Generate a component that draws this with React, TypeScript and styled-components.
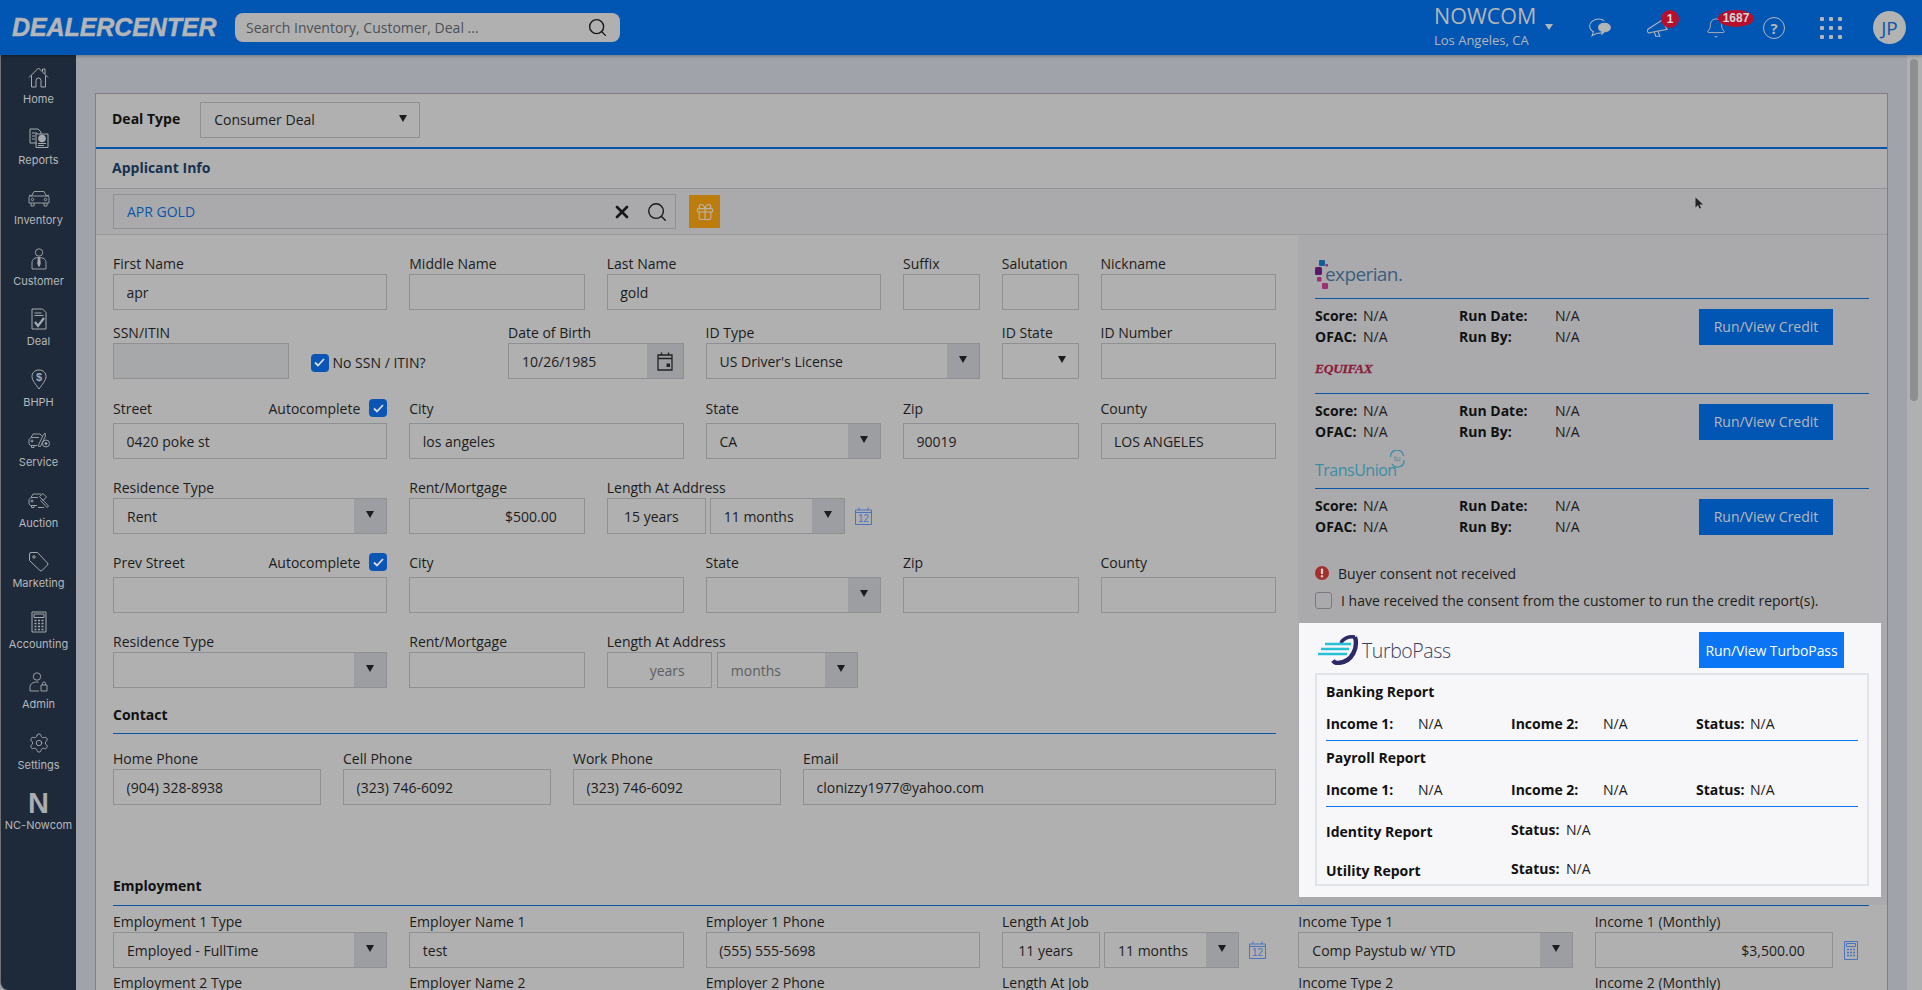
import React from "react";
import styled, { createGlobalStyle } from "styled-components";
import { Bell, Gift, Search, Settings, X } from "lucide-react";

const GlobalStyle = createGlobalStyle`
  html, body {
    margin: 0;
    padding: 0;
    width: 1922px;
    height: 990px;
    overflow: hidden;
    background: #a0a4aa;
    font-family: "Open Sans", "Liberation Sans", sans-serif;
    font-size: 14px;
    color: #1c1c1c;
  }
  * { box-sizing: border-box; }
`;

const navItems = [
  { label: "Home", icon: "home" },
  { label: "Reports", icon: "reports" },
  { label: "Inventory", icon: "inventory" },
  { label: "Customer", icon: "customer" },
  { label: "Deal", icon: "deal" },
  { label: "BHPH", icon: "bhph" },
  { label: "Service", icon: "service" },
  { label: "Auction", icon: "auction" },
  { label: "Marketing", icon: "marketing" },
  { label: "Accounting", icon: "accounting" },
  { label: "Admin", icon: "admin" },
  { label: "Settings", icon: "settings" },
  { label: "NC-Nowcom", icon: "nowcom" },
];

const NavIcon = ({ name }: { name: string }) => {
  switch (name) {
    case "home":
      return (
        <svg width="21" height="21" viewBox="0 0 21 21" fill="none" stroke="currentColor">
          <path d="M1 10.5 10.5 1 20 10.5M3.5 8.5V20H8v-6.5a2.5 2.5 0 0 1 5 0V20h4.5V8.5M14.5 4.5V2h2.5v5" />
        </svg>
      );
    case "reports":
      return (
        <svg width="20" height="20" viewBox="0 0 20 20" fill="none" stroke="currentColor">
          <path d="M8 15H1V1h8l3 3v2M3 5h5M3 8h3M3 11h3" />
          <path d="M7 6h12v13.5H7z" />
          <circle cx="13" cy="10.5" r="3.4" fill="currentColor" />
          <path d="M9 15.5h8M9 17.5h6" />
        </svg>
      );
    case "inventory":
      return (
        <svg width="22" height="17" viewBox="0 0 22 17" fill="none" stroke="currentColor" strokeWidth="0.9">
          <path d="M3.5 6 6 1.5h10L18.5 6M1 5l2.5 1M21 5l-2.5 1" />
          <path d="M2.5 6h17a1.5 1.5 0 0 1 1.5 1.5V13H1V7.500A1.5 1.5 0 0 1 2.5 6zM3 13v3h3v-3M16 13v3h3v-3" />
          <circle cx="4.5" cy="9.5" r="1.2" />
          <circle cx="17.5" cy="9.5" r="1.2" />
        </svg>
      );
    case "customer":
      return (
        <svg width="16" height="22" viewBox="0 0 16 22" fill="none" stroke="currentColor" strokeWidth="0.9">
          <circle cx="8" cy="4.5" r="3.7" />
          <path d="M1 21v-6c0-4 3-5.5 7-5.5s7 1.5 7 5.5v6z" />
          <path d="M7.200 9.500 6.800 16 8 18.500 9.200 16 8.800 9.500" fill="currentColor" />
        </svg>
      );
    case "deal":
      return (
        <svg width="16" height="22" viewBox="0 0 16 22" fill="none" stroke="currentColor">
          <path d="M1 1h10.5L15 4.500V21H1z" />
          <path d="M3.5 5h7M3.5 7.5h9" />
          <path d="M4 14l3 4 6-8" strokeWidth="2.2" />
        </svg>
      );
    case "bhph":
      return (
        <svg width="16" height="21" viewBox="0 0 16 21" fill="none" stroke="currentColor">
          <path d="M8 1C3.5 1 1 4 1 7.5c0 4 4 8 7 12.5 3-4.5 7-8.5 7-12.5C15 4 12.5 1 8 1z" />
          <text x="8" y="11.5" textAnchor="middle" fontSize="11" fontWeight="700" fill="currentColor" stroke="none" fontFamily="Liberation Sans">$</text>
        </svg>
      );
    case "service":
      return (
        <svg width="22" height="17" viewBox="0 0 22 17" fill="none" stroke="currentColor" strokeWidth="0.9">
          <path d="M3 5.5 5 2h7l2 2M9 13.5H2.500L1 12V7.500l2-2h8M3.500 13.500v2h2.500v-2" />
          <path d="M10 14 15 3.500l2-2.500.5 3-5 10.500z" />
          <circle cx="18" cy="11.5" r="3.5" />
          <circle cx="18" cy="11.5" r="1" fill="currentColor" />
          <circle cx="4" cy="9" r="1" />
        </svg>
      );
    case "auction":
      return (
        <svg width="22" height="17" viewBox="0 0 22 17" fill="none" stroke="currentColor" strokeWidth="0.9">
          <path d="M3 5.5 5 2h8M9 13.500H2.500L1 12V7.500l2-2h7M3.500 13.500v2h2.500v-2" />
          <path d="M11.500 4.500 15 1.500l3.500 3.500-3.500 3.500zM14 7l6.500 7-1.500 1.500-6.500-7M10 15.500h6" />
          <circle cx="4" cy="9" r="1" />
        </svg>
      );
    case "marketing":
      return (
        <svg width="21" height="21" viewBox="0 0 21 21" fill="none" stroke="currentColor">
          <path d="M1.5 3A1.5 1.5 0 0 1 3 1.500h6.500L19.500 12a1.500 1.500 0 0 1 0 2L14 19.500a1.500 1.500 0 0 1-2 0L1.500 9.500z" />
          <circle cx="6" cy="6" r="1.2" />
        </svg>
      );
    case "accounting":
      return (
        <svg width="16" height="22" viewBox="0 0 16 22" fill="none" stroke="currentColor">
          <path d="M1 1h14v20H1zM3 3h10v3.500H3z" />
          <path d="M3.500 9.500h2M7 9.500h2M10.500 9.500h2M3.500 12.500h2M7 12.500h2M10.500 12.500h2M3.500 15.500h2M7 15.500h2M10.500 15.500h2M3.500 18.500h2M7 18.500h2M10.500 18.500h2" strokeWidth="1.4" />
        </svg>
      );
    case "admin":
      return (
        <svg width="19" height="20" viewBox="0 0 19 20" fill="none" stroke="currentColor" strokeWidth="0.9">
          <circle cx="8" cy="4.5" r="3.7" />
          <path d="M1 19v-4c0-3 3-5 7-5h1.500M1 19h9" />
          <path d="M12 13h6v6h-6zM13.500 13v-1.500a1.500 1.500 0 0 1 3 0V13" />
        </svg>
      );
    case "settings":
      return <Settings size={22} strokeWidth={1} />;
    default:
      return <NowcomMark>N</NowcomMark>;
  }
};

const TopIcon = ({ name }: { name: string }) => {
  if (name === "chat") {
    return (
      <svg width="23" height="19" viewBox="0 0 23 19" fill="none" stroke="currentColor" strokeWidth="1.1">
        <path d="M16 2.500C14.500 1.200 12.500.7 10.500.7 5 .7.700 3.800.7 8c0 2.500 1.500 4.500 4 6l-1.500 4 5-2.500c2 .3 3.500 0 5-.4" />
        <path d="M16 5c3.500 0 6.300 1.900 6.300 4.500 0 2.500-2.800 4.500-6.300 4.500l-2.500 2.500.3-2.800c-2.300-.6-3.800-2.200-3.800-4.200C10 6.900 12.600 5 16 5z" fill="currentColor" />
      </svg>
    );
  }
  return (
    <svg width="24" height="20" viewBox="0 0 24 20" fill="none" stroke="currentColor" strokeWidth="1.2">
      <path d="M1.500 11 16 1.500 22 11.500 4 15a2.200 2.200 0 0 1-2.500-4z" />
      <path d="M8 14.500l1.500 4.500h4.500l-2-5.300" />
    </svg>
  );
};

const SmallCalendar = () => (
  <svg width="17" height="18" viewBox="0 0 17 18" fill="none" stroke="#4a74c0">
    <path d="M.5 3h16v14.500H.5zM.5 5.500h16M4 .5V3M13 .5V3" />
    <text x="8.5" y="15" textAnchor="middle" fontSize="10" fill="#4a74c0" stroke="none" fontFamily="Liberation Sans">12</text>
  </svg>
);

const PickerCalendar = () => (
  <svg width="16" height="19" viewBox="0 0 16 19" fill="none" stroke="#222">
    <path d="M1 3h14v15H1z" strokeWidth="1.3" />
    <path d="M1 6.500h14M4.500.5V3M11.500.5V3" strokeWidth="1.3" />
    <rect x="9.5" y="11.5" width="3.5" height="3.5" fill="#222" stroke="none" />
  </svg>
);

const SmallCalculator = () => (
  <svg width="14" height="19" viewBox="0 0 14 19" fill="none" stroke="#4a74c0">
    <path d="M.5.500h13v18H.5zM2.500 2.500h9v3h-9z" />
    <path d="M3 8.500h2M6 8.500h2M9 8.500h2M3 11.500h2M6 11.500h2M9 11.500h2M3 14.500h2M6 14.500h2M9 14.500h2" strokeWidth="1.3" />
  </svg>
);

const CheckBox = () => (
  <CheckMark>
    <svg width="11" height="9" viewBox="0 0 11 9" fill="none" stroke="#d9dde3" strokeWidth="1.8">
      <path d="M1 4.500 4 7.500 10 1" />
    </svg>
  </CheckMark>
);

const Field = ({ span, start, label, aside, children }: any) => (
  <FieldBox $span={span} $start={start}>
    {aside ? (
      <LabelRow>
        <FieldLabel>{label}</FieldLabel>
        {aside}
      </LabelRow>
    ) : (
      <FieldLabel>{label}</FieldLabel>
    )}
    {children}
  </FieldBox>
);

const Text = ({ value = "", right = false }: { value?: string; right?: boolean }) => (
  <TextInput readOnly value={value} $right={right} />
);

const Select = ({ value = "", plain = false, muted = false, width }: any) => (
  <SelectBox $width={width}>
    <SelectValue $muted={muted}>{value}</SelectValue>
    <ArrowBox $plain={plain}>
      <Arrow />
    </ArrowBox>
  </SelectBox>
);

const AutoComplete = () => (
  <AutoWrap>
    <FieldLabel as="span">Autocomplete</FieldLabel>
    <CheckBox />
  </AutoWrap>
);

const CreditBlock = ({ logo, first = false }: any) => (
  <>
    <CreditHead $first={first}>{logo}</CreditHead>
    <CreditBody>
      <CreditStats>
        <b>Score:</b>
        <span>N/A</span>
        <b>Run Date:</b>
        <span>N/A</span>
        <b>OFAC:</b>
        <span>N/A</span>
        <b>Run By:</b>
        <span>N/A</span>
      </CreditStats>
      <RunButton>Run/View Credit</RunButton>
    </CreditBody>
  </>
);

const IncomeRow = () => (
  <IncomeGrid>
    <b>Income 1:</b>
    <span>N/A</span>
    <b>Income 2:</b>
    <span>N/A</span>
    <b>Status:</b>
    <span>N/A</span>
  </IncomeGrid>
);

const App = () => {
  return (
    <Page>
      <GlobalStyle />
      <Header>
        <Logo>DEALERCENTER</Logo>
        <SearchBar>
          <SearchText>Search Inventory, Customer, Deal ...</SearchText>
          <Search size={21} strokeWidth={1.6} color="#15181c" />
        </SearchBar>
        <HeaderRight>
          <Account>
            <AccountName>NOWCOM</AccountName>
            <AccountCity>Los Angeles, CA</AccountCity>
          </Account>
          <AccountCaret />
          <TopButton>
            <TopIcon name="chat" />
          </TopButton>
          <TopButton>
            <TopIcon name="horn" />
            <Badge $round>1</Badge>
          </TopButton>
          <TopButton>
            <Bell size={26} strokeWidth={1} />
            <Badge>1687</Badge>
          </TopButton>
          <HelpIcon>?</HelpIcon>
          <AppsGrid>
            {Array.from({ length: 9 }).map((_, i) => (
              <i key={i} />
            ))}
          </AppsGrid>
          <Avatar>JP</Avatar>
        </HeaderRight>
      </Header>
      <Main>
        <Sidebar>
          {navItems.map((item) => (
            <NavItem key={item.label}>
              <NavIconBox>
                <NavIcon name={item.icon} />
              </NavIconBox>
              <NavLabel>{item.label}</NavLabel>
            </NavItem>
          ))}
        </Sidebar>
        <Content>
          <Panel>
            <DealRow>
              <DealLabel>Deal Type</DealLabel>
              <Select value="Consumer Deal" plain width="220px" />
            </DealRow>
            <SectionBar>Applicant Info</SectionBar>
            <LookupRow>
              <LookupBox>
                <LookupValue>APR GOLD</LookupValue>
                <X size={20} strokeWidth={3.2} color="#16181b" />
                <Search size={22} strokeWidth={1.5} color="#16181b" />
              </LookupBox>
              <GiftButton>
                <Gift size={20} strokeWidth={1.4} />
              </GiftButton>
            </LookupRow>
            <Body>
              <FormColumn>
                <FormRow $top={19}>
                  <Field span={3} label="First Name"><Text value="apr" /></Field>
                  <Field span={2} label="Middle Name"><Text /></Field>
                  <Field span={3} label="Last Name"><Text value="gold" /></Field>
                  <Field span={1} label="Suffix"><Text /></Field>
                  <Field span={1} label="Salutation"><Text /></Field>
                  <Field span={2} label="Nickname"><Text /></Field>
                </FormRow>
                <FormRow $top={13}>
                  <Field span={2} label="SSN/ITIN"><TextInput readOnly value="" $disabled /></Field>
                  <NoSsn>
                    <CheckBox />
                    No SSN / ITIN?
                  </NoSsn>
                  <Field span={2} label="Date of Birth">
                    <SelectBox>
                      <SelectValue>10/26/1985</SelectValue>
                      <ArrowBox $wide>
                        <PickerCalendar />
                      </ArrowBox>
                    </SelectBox>
                  </Field>
                  <Field span={3} label="ID Type"><Select value="US Driver's License" /></Field>
                  <Field span={1} label="ID State"><Select plain /></Field>
                  <Field span={2} label="ID Number"><Text /></Field>
                </FormRow>
                <FormRow $top={20}>
                  <Field span={3} label="Street" aside={<AutoComplete />}><Text value="0420 poke st" /></Field>
                  <Field span={3} label="City" aside={<span />}><Text value="los angeles" /></Field>
                  <Field span={2} label="State" aside={<span />}><Select value="CA" /></Field>
                  <Field span={2} label="Zip" aside={<span />}><Text value="90019" /></Field>
                  <Field span={2} label="County" aside={<span />}><Text value="LOS ANGELES" /></Field>
                </FormRow>
                <FormRow $top={19}>
                  <Field span={3} label="Residence Type"><Select value="Rent" /></Field>
                  <Field span={2} label="Rent/Mortgage"><Text value="$500.00" right /></Field>
                  <Field span={4} label="Length At Address">
                    <LengthRow>
                      <LengthInput readOnly value="15 years" $width={99} />
                      <Select value="11 months" width="135px" />
                      <CalendarSlot>
                        <SmallCalendar />
                      </CalendarSlot>
                    </LengthRow>
                  </Field>
                </FormRow>
                <FormRow $top={19}>
                  <Field span={3} label="Prev Street" aside={<AutoComplete />}><Text /></Field>
                  <Field span={3} label="City" aside={<span />}><Text /></Field>
                  <Field span={2} label="State" aside={<span />}><Select /></Field>
                  <Field span={2} label="Zip" aside={<span />}><Text /></Field>
                  <Field span={2} label="County" aside={<span />}><Text /></Field>
                </FormRow>
                <FormRow $top={19}>
                  <Field span={3} label="Residence Type"><Select /></Field>
                  <Field span={2} label="Rent/Mortgage"><Text /></Field>
                  <Field span={4} label="Length At Address">
                    <LengthRow $gap={5}>
                      <LengthInput readOnly value="years" $width={105} $muted />
                      <Select value="months" muted width="141px" />
                    </LengthRow>
                  </Field>
                </FormRow>
                <SectionTitle $top={17}>Contact</SectionTitle>
                <ContactRow>
                  <PhoneField>
                    <FieldLabel>Home Phone</FieldLabel>
                    <Text value="(904) 328-8938" />
                  </PhoneField>
                  <PhoneField>
                    <FieldLabel>Cell Phone</FieldLabel>
                    <Text value="(323) 746-6092" />
                  </PhoneField>
                  <PhoneField>
                    <FieldLabel>Work Phone</FieldLabel>
                    <Text value="(323) 746-6092" />
                  </PhoneField>
                  <EmailField>
                    <FieldLabel>Email</FieldLabel>
                    <Text value="clonizzy1977@yahoo.com" />
                  </EmailField>
                </ContactRow>
                <EmploymentTitle>Employment</EmploymentTitle>
              </FormColumn>
              <CreditColumn>
                <CreditBlock
                  first
                  logo={
                    <ExperianLogo>
                      <svg width="13" height="29" viewBox="0 0 13 29">
                        <rect x="4" y="0" width="6" height="6" rx="1" fill="#0f5f9c" />
                        <rect x="10.5" y="4" width="2.5" height="2.5" fill="#a02e74" />
                        <rect x="0" y="7" width="7" height="8" rx="1.5" fill="#5a1a6c" />
                        <rect x="2" y="17" width="4.5" height="4.5" rx="1" fill="#a02e74" />
                        <rect x="7" y="23" width="6" height="6" rx="1" fill="#a02e74" />
                      </svg>
                      <ExperianText>experian.</ExperianText>
                    </ExperianLogo>
                  }
                />
                <CreditBlock logo={<EquifaxLogo>EQUIFAX</EquifaxLogo>} />
                <CreditBlock
                  logo={
                    <TransUnionLogo>
                      TransUnion
                      <TuBadge>
                        <svg width="16" height="19" viewBox="0 0 16 19" fill="none" stroke="#3a8ea5" strokeWidth="1.3">
                          <path d="M1.500 7a6.500 6.500 0 0 1 13-1M15 10a6.500 6.500 0 0 1-12 4" />
                          <text x="8" y="11" textAnchor="middle" fontSize="7.5" fill="#3a8ea5" stroke="none" fontFamily="Open Sans">tu</text>
                        </svg>
                      </TuBadge>
                    </TransUnionLogo>
                  }
                />
                <ConsentNote>
                  <svg width="14" height="14" viewBox="0 0 14 14">
                    <circle cx="7" cy="7" r="7" fill="#a3302c" />
                    <rect x="5.9" y="2.5" width="2.2" height="5.8" rx="1" fill="#d4d4d4" />
                    <circle cx="7" cy="10.3" r="1.2" fill="#d4d4d4" />
                  </svg>
                  Buyer consent not received
                </ConsentNote>
                <ConsentCheck>
                  <EmptyBox />
                  I have received the consent from the customer to run the credit report(s).
                </ConsentCheck>
                <TurboCard>
                  <TurboHead>
                    <TurboLogo>
                      <svg width="42" height="30" viewBox="0 0 42 30" fill="none">
                        <path d="M38 2C31 1 25.500 4 24 8" stroke="#2c2a66" strokeWidth="3.4" />
                        <path d="M38 2C41 12 36 27 21 28 18.500 28.200 17 27 16 25.500" stroke="#2c2a66" strokeWidth="4.4" />
                        <path d="M8 9h26M4 14h28M1 19h29" stroke="#28c0d4" strokeWidth="2.6" />
                      </svg>
                      <TurboText>TurboPass</TurboText>
                    </TurboLogo>
                    <TurboButton>Run/View TurboPass</TurboButton>
                  </TurboHead>
                  <ReportBox>
                    <ReportTitle>Banking Report</ReportTitle>
                    <IncomeRow />
                    <ReportTitle $top={7}>Payroll Report</ReportTitle>
                    <IncomeRow />
                    <StatusRow $top={13}>
                      <ReportName>Identity Report</ReportName>
                      <StatusPair>
                        <b>Status:</b>
                        <span>N/A</span>
                      </StatusPair>
                    </StatusRow>
                    <StatusRow $top={17}>
                      <ReportName>Utility Report</ReportName>
                      <StatusPair>
                        <b>Status:</b>
                        <span>N/A</span>
                      </StatusPair>
                    </StatusRow>
                  </ReportBox>
                </TurboCard>
              </CreditColumn>
            </Body>
            <EmploymentGrid>
              <Field span={3} label="Employment 1 Type"><Select value="Employed - FullTime" /></Field>
              <Field span={3} label="Employer Name 1"><Text value="test" /></Field>
              <Field span={3} label="Employer 1 Phone"><Text value="(555) 555-5698" /></Field>
              <Field span={3} label="Length At Job">
                <LengthRow>
                  <LengthInput readOnly value="11 years" $width={98} />
                  <Select value="11 months" width="135px" />
                  <CalendarSlot>
                    <SmallCalendar />
                  </CalendarSlot>
                </LengthRow>
              </Field>
              <Field span={3} label="Income Type 1"><Select value="Comp Paystub w/ YTD" /></Field>
              <Field span={3} label="Income 1 (Monthly)">
                <IncomeAmount>
                  <AmountSlot>
                    <Text value="$3,500.00" right />
                  </AmountSlot>
                  <SmallCalculator />
                </IncomeAmount>
              </Field>
              <Field span={3} label="Employment 2 Type" />
              <Field span={3} label="Employer Name 2" />
              <Field span={3} label="Employer 2 Phone" />
              <Field span={3} label="Length At Job" />
              <Field span={3} label="Income Type 2" />
              <Field span={3} label="Income 2 (Monthly)" />
            </EmploymentGrid>
          </Panel>
        </Content>
        <ScrollTrack>
          <ScrollThumb />
        </ScrollTrack>
      </Main>
      <Pointer>
        <svg width="8" height="13" viewBox="0 0 8 13">
          <path d="M.5.500v10l2.500-2.500 1.500 3.500 1.500-.6L4.500 7.500H8z" fill="#222" />
        </svg>
      </Pointer>
    </Page>
  );
};

const Page = styled.div`
  position: relative;
  width: 1922px;
  height: 990px;
  overflow: hidden;
`;

const Header = styled.header`
  position: relative;
  z-index: 2;
  display: flex;
  align-items: center;
  height: 55px;
  padding-left: 12px;
  background: #0256b3;
  box-shadow: 0 1px 3px rgba(0, 0, 0, 0.3);
`;

const Logo = styled.div`
  width: 205px;
  font-family: "Liberation Sans", sans-serif;
  font-size: 25px;
  font-weight: 700;
  font-style: italic;
  letter-spacing: -0.1px;
  color: #b3b5b8;
  -webkit-text-stroke: 0.5px #b3b5b8;
`;

const SearchBar = styled.div`
  display: flex;
  align-items: center;
  justify-content: space-between;
  width: 385px;
  height: 29px;
  margin-left: 18px;
  padding: 0 12px 0 11px;
  background: #b0b0b0;
  border-radius: 8px;
`;

const SearchText = styled.span`
  font-size: 14px;
  color: #4c5157;
`;

const HeaderRight = styled.div`
  display: flex;
  align-items: center;
  margin-left: auto;
  padding-right: 16px;
  color: #b3b5b8;
`;

const Account = styled.div`
  display: flex;
  flex-direction: column;
  width: 111px;
`;

const AccountName = styled.span`
  font-size: 21.5px;
  line-height: 26px;
  margin-top: -2px;
`;

const AccountCity = styled.span`
  font-size: 13px;
  line-height: 20px;
  font-weight: 500;
  margin-top: 1px;
`;

const AccountCaret = styled.i`
  width: 0;
  height: 0;
  position: relative;
  top: -1px;
  border-left: 4px solid transparent;
  border-right: 4px solid transparent;
  border-top: 6px solid #b3b5b8;
  margin-right: 36px;
`;

const TopButton = styled.div`
  position: relative;
  display: flex;
  align-items: center;
  justify-content: center;
  width: 22px;
  height: 24px;
  margin-right: 36px;
`;

const Badge = styled.span<{ $round?: boolean }>`
  position: absolute;
  top: -6px;
  left: ${(p) => (p.$round ? "14px" : "13px")};
  display: flex;
  align-items: center;
  justify-content: center;
  width: ${(p) => (p.$round ? "18px" : "36px")};
  height: ${(p) => (p.$round ? "18px" : "17px")};
  border-radius: 50%;
  background: #b5102d;
  color: #d5d5d5;
  font-family: "Liberation Sans", sans-serif;
  font-size: 12px;
  font-weight: 700;
`;

const HelpIcon = styled.div`
  display: flex;
  align-items: center;
  justify-content: center;
  width: 22px;
  height: 22px;
  margin-right: 35px;
  border: 1px solid #b3b5b8;
  border-radius: 50%;
  font-size: 15px;
  font-weight: 700;
`;

const AppsGrid = styled.div`
  display: grid;
  grid-template-columns: repeat(3, 4px);
  grid-auto-rows: 4px;
  gap: 5px;
  margin-right: 31px;

  i {
    background: #b3b5b8;
    border-radius: 1px;
  }
`;

const Avatar = styled.div`
  display: flex;
  align-items: center;
  justify-content: center;
  width: 33px;
  height: 33px;
  border-radius: 50%;
  background: #b3b3b3;
  color: #0b55a8;
  font-size: 19px;
`;

const Main = styled.div`
  display: flex;
  height: 935px;
`;

const Sidebar = styled.nav`
  flex: 0 0 76px;
  padding-top: 7px;
  background: #1e2a39;
  border-left: 1px solid #6e7074;
  border-bottom-left-radius: 8px;
  color: #a6aaaf;
`;

const NavItem = styled.div`
  display: flex;
  flex-direction: column;
  align-items: center;
  height: 60.5px;
`;

const NavIconBox = styled.div`
  display: flex;
  align-items: center;
  justify-content: center;
  height: 30px;
`;

const NavLabel = styled.span`
  font-family: Inter, "Liberation Sans", sans-serif;
  font-size: 11px;
  line-height: 14px;
  color: #b5b8bc;
  white-space: nowrap;
`;

const NowcomMark = styled.span`
  font-family: "Liberation Sans", sans-serif;
  font-size: 29px;
  line-height: 30px;
  font-weight: 700;
  color: #a9acb0;
`;

const Content = styled.div`
  flex: 0 0 1831px;
  padding: 38px 19px 0;
  overflow: hidden;
`;

const Panel = styled.section`
  width: 1793px;
  border: 1px solid #7d7f82;
  border-bottom: 0;
  background: #b0b0b0;
`;

const DealRow = styled.div`
  display: flex;
  align-items: center;
  gap: 20px;
  height: 55px;
  padding: 0 0 2px 16px;
  border-bottom: 2px solid #0b55a8;
`;

const DealLabel = styled.span`
  flex: 0 0 68px;
  margin-top: -2px;
  font-weight: 700;
  white-space: nowrap;
  color: #111;
`;

const SectionBar = styled.div`
  display: flex;
  align-items: center;
  height: 40px;
  padding: 0 0 2px 16px;
  border-bottom: 1px solid #919396;
  font-weight: 700;
  color: #17324f;
`;

const LookupRow = styled.div`
  display: flex;
  align-items: center;
  gap: 13px;
  height: 46px;
  padding-left: 17px;
  background: #aaaaac;
  border-bottom: 1px solid #999a9c;
`;

const LookupBox = styled.div`
  display: flex;
  align-items: center;
  width: 563px;
  height: 35px;
  padding: 0 7px 0 13px;
  gap: 14px;
  border: 1px solid #8e9094;
`;

const LookupValue = styled.span`
  flex: 1;
  color: #0b55a8;
`;

const GiftButton = styled.div`
  display: flex;
  align-items: center;
  justify-content: center;
  width: 31px;
  height: 33px;
  background: #bd7c0e;
  color: #b9b3a6;
`;

const Body = styled.div`
  display: grid;
  grid-template-columns: 1202px 1fr;
`;

const FormColumn = styled.div`
  display: flex;
  flex-direction: column;
  padding: 0 22px 0 17px;
`;

const FormRow = styled.div<{ $top: number }>`
  display: grid;
  grid-template-columns: repeat(12, 1fr);
  column-gap: 22px;
  margin-top: ${(p) => p.$top}px;
`;

const FieldBox = styled.div<{ $span: number; $start?: number }>`
  grid-column: ${(p) => (p.$start ? `${p.$start} / ` : "")}span ${(p) => p.$span};
  min-width: 0;
`;

const FieldLabel = styled.div`
  height: 20px;
  line-height: 20px;
  white-space: nowrap;
  color: #1c1c1c;
`;

const LabelRow = styled.div`
  display: flex;
  justify-content: space-between;
  height: 24px;
`;

const AutoWrap = styled.span`
  display: flex;
  align-items: flex-start;
  gap: 9px;
`;

const CheckMark = styled.span`
  display: inline-flex;
  flex: none;
  align-items: center;
  justify-content: center;
  width: 18px;
  height: 18px;
  border-radius: 4px;
  background: #0b55b4;
`;

const EmptyBox = styled.span`
  flex: none;
  width: 17px;
  height: 17px;
  border: 1px solid #797b7e;
  border-radius: 3px;
`;

const NoSsn = styled.label`
  grid-column: span 2;
  display: flex;
  align-items: center;
  align-self: end;
  gap: 4px;
  margin-bottom: 7px;
  white-space: nowrap;
`;

const TextInput = styled.input<{ $right?: boolean; $disabled?: boolean }>`
  display: block;
  width: 100%;
  height: 36px;
  padding: 0 ${(p) => (p.$right ? "27px" : "12.5px")};
  border: 1px solid #8e9094;
  border-radius: 0;
  outline: none;
  background: ${(p) => (p.$disabled ? "#a7a8aa" : "transparent")};
  color: #1c1c1c;
  font: inherit;
  text-align: ${(p) => (p.$right ? "right" : "left")};
`;

const SelectBox = styled.div<{ $width?: string }>`
  display: flex;
  align-items: stretch;
  flex: none;
  width: ${(p) => p.$width || "100%"};
  height: 36px;
  border: 1px solid #8e9094;
`;

const SelectValue = styled.span<{ $muted?: boolean }>`
  flex: 1;
  display: flex;
  align-items: center;
  min-width: 0;
  padding-left: 13px;
  white-space: nowrap;
  color: ${(p) => (p.$muted ? "#5c5f63" : "#1c1c1c")};
`;

const ArrowBox = styled.span<{ $plain?: boolean; $wide?: boolean }>`
  display: flex;
  align-items: center;
  justify-content: center;
  flex: none;
  width: ${(p) => (p.$wide ? "36px" : "32px")};
  background: ${(p) => (p.$plain ? "transparent" : "#9c9ea2")};
`;

const Arrow = styled.i`
  width: 0;
  height: 0;
  margin-bottom: 3px;
  border-left: 4.5px solid transparent;
  border-right: 4.5px solid transparent;
  border-top: 7px solid #1a1c1f;
`;

const LengthRow = styled.div<{ $gap?: number }>`
  display: flex;
  align-items: center;
  gap: ${(p) => p.$gap ?? 4}px;
`;

const LengthInput = styled.input<{ $width: number; $muted?: boolean }>`
  flex: none;
  width: ${(p) => p.$width}px;
  height: 36px;
  padding: 0 26px 0 0;
  border: 1px solid #8e9094;
  border-radius: 0;
  outline: none;
  background: transparent;
  color: ${(p) => (p.$muted ? "#5c5f63" : "#1c1c1c")};
  font: inherit;
  text-align: right;
`;

const CalendarSlot = styled.span`
  display: flex;
  margin-left: 6px;
`;

const SectionTitle = styled.div<{ $top: number }>`
  margin-top: ${(p) => p.$top}px;
  padding-bottom: 8px;
  line-height: 20px;
  font-weight: 700;
  color: #111;
  border-bottom: 1px solid #0b55a8;
`;

const ContactRow = styled.div`
  display: flex;
  gap: 22px;
  margin-top: 15px;
`;

const PhoneField = styled.div`
  flex: 0 0 208px;
`;

const EmailField = styled.div`
  flex: 1;
`;

const EmploymentTitle = styled.div`
  margin-top: 71px;
  padding-bottom: 8px;
  line-height: 20px;
  font-weight: 700;
  color: #111;
`;

const EmploymentGrid = styled.div`
  display: grid;
  grid-template-columns: repeat(18, 1fr);
  column-gap: 22px;
  row-gap: 5px;
  margin: 0 18px 0 17px;
  padding-top: 6px;
  border-top: 1px solid #0b55a8;
`;

const IncomeAmount = styled.div`
  display: flex;
  align-items: center;
  gap: 11px;
`;

const AmountSlot = styled.div`
  flex: 0 0 238px;
`;

const CreditColumn = styled.div`
  padding: 0 18px 8px 17px;
  background: #aaaaac;
`;

const CreditHead = styled.div<{ $first?: boolean }>`
  display: flex;
  align-items: flex-end;
  height: ${(p) => (p.$first ? "64px" : "47px")};
  border-bottom: 1px solid #0b55a8;
`;

const CreditBody = styled.div`
  display: flex;
  align-items: flex-start;
  margin-top: 6px;
`;

const CreditStats = styled.div`
  display: grid;
  grid-template-columns: 48px 96px 96px 60px;
  grid-auto-rows: 21px;
  line-height: 21px;

  b {
    color: #111;
  }
`;

const RunButton = styled.button`
  width: 134px;
  height: 36px;
  margin: 4px 0 0 84px;
  padding: 0 0 2px;
  border: 0;
  background: #0256b3;
  color: #b5b8bc;
  font: inherit;
  white-space: nowrap;
`;

const ExperianLogo = styled.div`
  display: flex;
  align-items: flex-start;
  margin-bottom: 9px;
`;

const ExperianText = styled.span`
  margin: 1px 0 0 -3px;
  font-size: 19px;
  line-height: 26px;
  letter-spacing: -0.6px;
  color: #3b5f80;
`;

const EquifaxLogo = styled.div`
  margin-bottom: 17px;
  font-family: "Liberation Serif", serif;
  font-size: 13.5px;
  line-height: 14px;
  font-weight: 700;
  font-style: italic;
  letter-spacing: -0.3px;
  color: #8a1c3a;
  -webkit-text-stroke: 0.3px #8a1c3a;
`;

const TransUnionLogo = styled.div`
  position: relative;
  margin-bottom: 7px;
  font-size: 16px;
  line-height: 22px;
  letter-spacing: -0.5px;
  color: #3a8ea5;
`;

const TuBadge = styled.span`
  position: absolute;
  top: -9px;
  right: -8px;
`;

const ConsentNote = styled.div`
  display: flex;
  align-items: center;
  gap: 9px;
  height: 20px;
  margin-top: 26px;
`;

const ConsentCheck = styled.label`
  display: flex;
  align-items: center;
  gap: 9px;
  height: 20px;
  margin-top: 7px;
  white-space: nowrap;
`;

const TurboCard = styled.div`
  margin: 13px -12px 0 -16px;
  padding: 9px 0 11px 16px;
  background: #f7f7fa;
  color: #1c1c1c;
`;

const TurboHead = styled.div`
  display: flex;
  align-items: center;
  height: 36px;
  padding-right: 37px;
`;

const TurboLogo = styled.div`
  display: flex;
  align-items: center;
  gap: 3px;
  margin-left: 2px;
`;

const TurboText = styled.span`
  font-size: 19.5px;
  font-weight: 300;
  letter-spacing: -0.4px;
  color: #3a3f5c;
`;

const TurboButton = styled.button`
  width: 145px;
  height: 36px;
  margin-left: auto;
  padding: 0;
  border: 0;
  background: #0a75f5;
  color: #fff;
  font: inherit;
  font-weight: 500;
  letter-spacing: -0.1px;
  white-space: nowrap;
`;

const ReportBox = styled.div`
  width: 554px;
  margin-top: 5px;
  padding: 7px 9px 3px;
  border: 2px solid #e0e3e8;
`;

const ReportTitle = styled.div<{ $top?: number }>`
  margin-top: ${(p) => p.$top ?? 0}px;
  line-height: 20px;
  font-weight: 700;
  color: #111;
`;

const IncomeGrid = styled.div`
  display: grid;
  grid-template-columns: 92px 93px 92px 93px 54px 1fr;
  margin-top: 12px;
  padding-bottom: 6px;
  line-height: 20px;
  border-bottom: 1px solid #0a75f5;

  b {
    color: #111;
  }
`;

const StatusRow = styled.div<{ $top: number }>`
  display: flex;
  align-items: flex-start;
  margin-top: ${(p) => p.$top}px;
`;

const ReportName = styled.div`
  flex: 0 0 185px;
  height: 22px;
  padding-top: 2px;
  line-height: 20px;
  font-weight: 700;
  color: #111;
`;

const StatusPair = styled.div`
  display: grid;
  grid-template-columns: 55px 1fr;
  line-height: 20px;

  b {
    color: #111;
  }
`;

const ScrollTrack = styled.div`
  flex: 1;
  padding: 4px 4px 0 3px;
  background: #aeb0b2;
`;

const ScrollThumb = styled.div`
  height: 342px;
  border-radius: 4px;
  background: #8e8f92;
`;

const Pointer = styled.div`
  position: absolute;
  top: 197px;
  left: 1695px;
  line-height: 0;
`;

export default App;
